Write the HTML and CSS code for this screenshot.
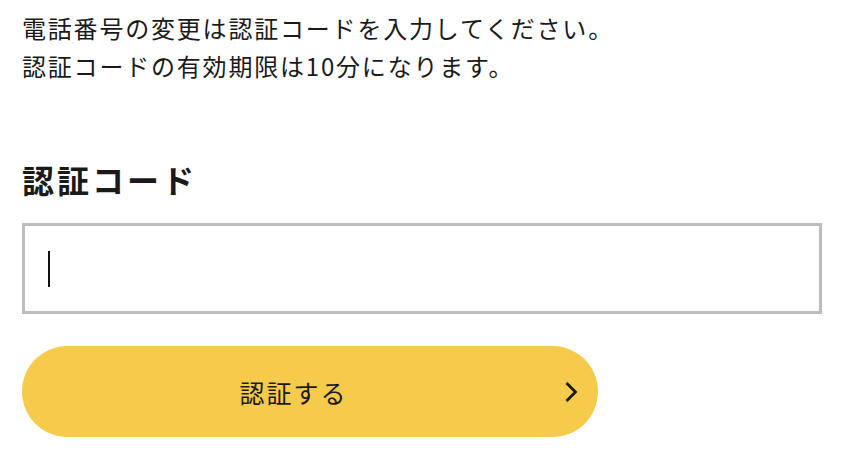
FILE: index.html
```html
<!DOCTYPE html>
<html lang="ja">
<head>
    <meta charset="UTF-8">
    <meta name="viewport" content="width=device-width, initial-scale=1.0">
    <title>認証コード</title>
    <link rel="stylesheet" href="styles.css">
</head>
<body>
    <div class="page">
        <p class="notice">電話番号の変更は認証コードを入力してください。<br>認証コードの有効期限は10分になります。</p>
        <h2 class="label">認証コード</h2>
        <div class="field">
            <span class="caret"></span>
        </div>
        <button class="submit">
            <span class="submit-text">認証する</span>
            <svg class="chevron" width="14" height="22" viewBox="0 0 14 22">
                <path d="M2.5 2 L11.5 11 L2.5 20" fill="none" stroke="#1a1a1a" stroke-width="2.8"/>
            </svg>
        </button>
    </div>
</body>
</html>
```

FILE: styles.css
```css
body, html {
    margin: 0;
    padding: 0;
    background: #fff;
    color: #1a1a1a;
    font-family: "Noto Sans CJK JP", "Noto Sans", sans-serif;
}
.page {
    padding: 9px 34px 0 22px;
}
.notice {
    margin: 0;
    font-size: 24px;
    line-height: 38px;
    letter-spacing: 1.8px;
}
.label {
    margin: 74px 0 0;
    font-size: 32px;
    line-height: 40px;
    font-weight: bold;
    letter-spacing: 3px;
}
.field {
    margin-top: 24px;
    border: 3px solid #bdbdbd;
    box-sizing: border-box;
    height: 91px;
    display: flex;
    align-items: center;
    padding-left: 23px;
}
.caret {
    width: 2px;
    height: 36px;
    background: #111;
}
.submit {
    margin-top: 32px;
    width: 576px;
    height: 91px;
    border: none;
    border-radius: 46px;
    background: #f6cb4b;
    position: relative;
    display: flex;
    align-items: center;
    justify-content: center;
    font-family: inherit;
    color: #1a1a1a;
    padding: 0 33px 0 0;
}
.submit-text {
    font-size: 25px;
    letter-spacing: 2px;
}
.chevron {
    position: absolute;
    right: 20px;
    top: 35px;
}
```
